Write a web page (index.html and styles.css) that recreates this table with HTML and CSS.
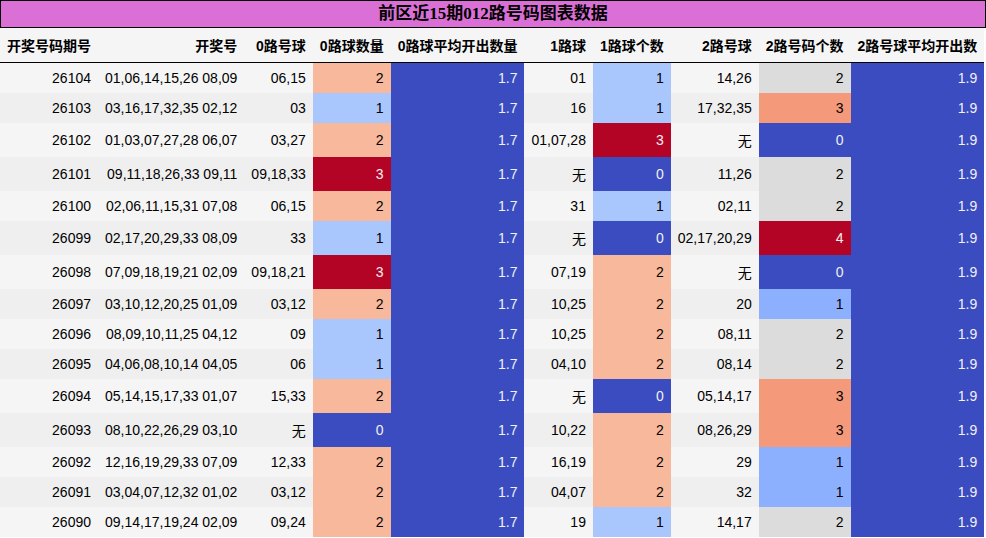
FILE: index.html
```html
<!DOCTYPE html>
<html lang="zh">
<head>
<meta charset="utf-8">
<title>前区近15期012路号码图表数据</title>
<link rel="stylesheet" href="styles.css">
</head>
<body>
<div class="title">前区近15期012路号码图表数据</div>
<table class="data">
<thead>
<tr><th>开奖号码期号</th><th>开奖号</th><th>0路号球</th><th>0路球数量</th><th>0路球平均开出数量</th><th>1路球</th><th>1路球个数</th><th>2路号球</th><th>2路号码个数</th><th>2路号球平均开出数</th></tr>
</thead>
<tbody>
<tr><td>26104</td><td>01,06,14,15,26 08,09</td><td>06,15</td><td class="q2">2</td><td class="q0">1.7</td><td>01</td><td class="q1">1</td><td>14,26</td><td class="g2">2</td><td class="q0">1.9</td></tr>
<tr><td>26103</td><td>03,16,17,32,35 02,12</td><td>03</td><td class="q1">1</td><td class="q0">1.7</td><td>16</td><td class="q1">1</td><td>17,32,35</td><td class="g3">3</td><td class="q0">1.9</td></tr>
<tr><td>26102</td><td>01,03,07,27,28 06,07</td><td>03,27</td><td class="q2">2</td><td class="q0">1.7</td><td>01,07,28</td><td class="q3">3</td><td>无</td><td class="q0">0</td><td class="q0">1.9</td></tr>
<tr><td>26101</td><td>09,11,18,26,33 09,11</td><td>09,18,33</td><td class="q3">3</td><td class="q0">1.7</td><td>无</td><td class="q0">0</td><td>11,26</td><td class="g2">2</td><td class="q0">1.9</td></tr>
<tr><td>26100</td><td>02,06,11,15,31 07,08</td><td>06,15</td><td class="q2">2</td><td class="q0">1.7</td><td>31</td><td class="q1">1</td><td>02,11</td><td class="g2">2</td><td class="q0">1.9</td></tr>
<tr><td>26099</td><td>02,17,20,29,33 08,09</td><td>33</td><td class="q1">1</td><td class="q0">1.7</td><td>无</td><td class="q0">0</td><td>02,17,20,29</td><td class="q3">4</td><td class="q0">1.9</td></tr>
<tr><td>26098</td><td>07,09,18,19,21 02,09</td><td>09,18,21</td><td class="q3">3</td><td class="q0">1.7</td><td>07,19</td><td class="q2">2</td><td>无</td><td class="q0">0</td><td class="q0">1.9</td></tr>
<tr><td>26097</td><td>03,10,12,20,25 01,09</td><td>03,12</td><td class="q2">2</td><td class="q0">1.7</td><td>10,25</td><td class="q2">2</td><td>20</td><td class="g1">1</td><td class="q0">1.9</td></tr>
<tr><td>26096</td><td>08,09,10,11,25 04,12</td><td>09</td><td class="q1">1</td><td class="q0">1.7</td><td>10,25</td><td class="q2">2</td><td>08,11</td><td class="g2">2</td><td class="q0">1.9</td></tr>
<tr><td>26095</td><td>04,06,08,10,14 04,05</td><td>06</td><td class="q1">1</td><td class="q0">1.7</td><td>04,10</td><td class="q2">2</td><td>08,14</td><td class="g2">2</td><td class="q0">1.9</td></tr>
<tr><td>26094</td><td>05,14,15,17,33 01,07</td><td>15,33</td><td class="q2">2</td><td class="q0">1.7</td><td>无</td><td class="q0">0</td><td>05,14,17</td><td class="g3">3</td><td class="q0">1.9</td></tr>
<tr><td>26093</td><td>08,10,22,26,29 03,10</td><td>无</td><td class="q0">0</td><td class="q0">1.7</td><td>10,22</td><td class="q2">2</td><td>08,26,29</td><td class="g3">3</td><td class="q0">1.9</td></tr>
<tr><td>26092</td><td>12,16,19,29,33 07,09</td><td>12,33</td><td class="q2">2</td><td class="q0">1.7</td><td>16,19</td><td class="q2">2</td><td>29</td><td class="g1">1</td><td class="q0">1.9</td></tr>
<tr><td>26091</td><td>03,04,07,12,32 01,02</td><td>03,12</td><td class="q2">2</td><td class="q0">1.7</td><td>04,07</td><td class="q2">2</td><td>32</td><td class="g1">1</td><td class="q0">1.9</td></tr>
<tr><td>26090</td><td>09,14,17,19,24 02,09</td><td>09,24</td><td class="q2">2</td><td class="q0">1.7</td><td>19</td><td class="q1">1</td><td>14,17</td><td class="g2">2</td><td class="q0">1.9</td></tr>
</tbody>
</table>
</body>
</html>
```
FILE: styles.css
```css
html, body {
  margin: 0;
  padding: 0;
  background: #ffffff;
}
body {
  font-family: "Liberation Sans", "Noto Sans CJK SC", sans-serif;
  font-size: 14px;
  color: #000;
}
.title {
  box-sizing: border-box;
  width: 986px;
  height: 28px;
  border: 1px solid #000;
  background: #da70d6;
  text-align: center;
  font-family: "Liberation Serif", "Noto Sans CJK SC", serif;
  font-weight: bold;
  font-size: 17px;
  line-height: 26px;
  overflow: hidden;
}
.data {
  border-collapse: collapse;
  border-spacing: 0;
}
.data th {
  background: #f5f5f5;
  font-weight: bold;
  text-align: right;
  padding: 7px;
  white-space: nowrap;
  border-bottom: 1px solid #000;
}
.data td {
  text-align: right;
  padding: 7px;
  white-space: nowrap;
}
.data tbody tr:nth-child(odd) { background: #f5f5f5; }
.data tbody tr:nth-child(even) { background: #efefef; }
.data td.q0 { background: #3b4cc0; color: #f1f1f1; }
.data td.q1 { background: #aac7fd; }
.data td.q2 { background: #f7b89c; }
.data td.q3 { background: #b40426; color: #f1f1f1; }
.data td.g1 { background: #8db0fe; }
.data td.g2 { background: #dddcdc; }
.data td.g3 { background: #f49a7b; }
```
